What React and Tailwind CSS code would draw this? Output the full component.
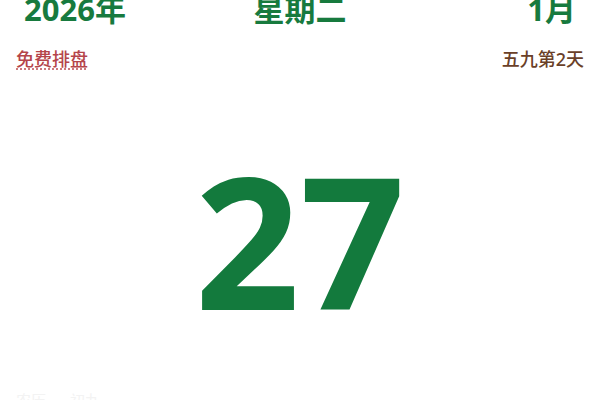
import React from "react";

const font = { fontFamily: '"Noto Sans", "Noto Sans CJK SC", sans-serif' };

export default function App() {
  return (
    <div
      style={font}
      className="w-[600px] h-[400px] overflow-hidden bg-white flex flex-col"
    >
      {/* top: year / weekday / month */}
      <div className="grid grid-cols-3 items-center px-6 -mt-[9px] h-[36px] text-[31px] leading-[36px] font-bold text-[#177a3e]">
        <span>2026年</span>
        <span className="text-center">星期二</span>
        <span className="text-right">1月</span>
      </div>

      {/* second row */}
      <div className="flex justify-between items-center px-4 mt-[20px] text-[18px] leading-[24px] font-medium">
        <a className="text-[#b5454a] underline decoration-dotted decoration-[#c86a6e] underline-offset-[3px]">
          免费排盘
        </a>
        <span className="text-[#6a4028]">五九第2天</span>
      </div>

      {/* big date */}
      <div className="flex justify-center mt-[76px]">
        <span className="text-[184px] leading-none font-bold text-[#137a3d]">
          27
        </span>
      </div>

      {/* faint bottom text */}
      <div className="flex gap-6 px-4 mt-auto -mb-[10px] text-[15px] leading-[20px] text-[#f3f3f3]">
        <span>农历</span>
        <span>初九</span>
      </div>
    </div>
  );
}
